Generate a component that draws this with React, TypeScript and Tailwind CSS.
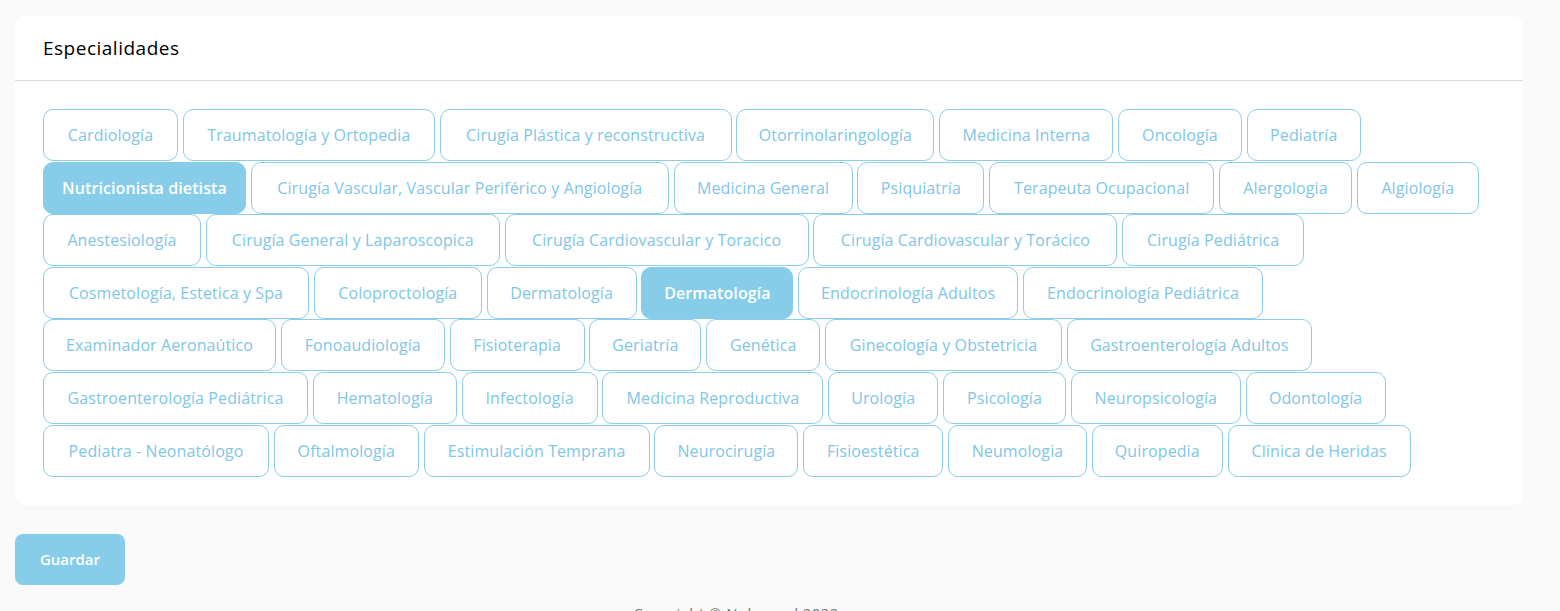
import React from "react";

type Item = { label: string; w: number; active?: boolean };

const items: Item[] = [
  { label: "Cardiología", w: 135 },
  { label: "Traumatología y Ortopedia", w: 252 },
  { label: "Cirugía Plástica y reconstructiva", w: 292 },
  { label: "Otorrinolaringología", w: 198 },
  { label: "Medicina Interna", w: 174 },
  { label: "Oncología", w: 124 },
  { label: "Pediatría", w: 114 },
  { label: "Nutricionista dietista", w: 203, active: true },
  { label: "Cirugía Vascular, Vascular Periférico y Angiología", w: 418 },
  { label: "Medicina General", w: 179 },
  { label: "Psiquiatría", w: 127 },
  { label: "Terapeuta Ocupacional", w: 225 },
  { label: "Alergologia", w: 133 },
  { label: "Algiología", w: 122 },
  { label: "Anestesiología", w: 158 },
  { label: "Cirugía General y Laparoscopica", w: 294 },
  { label: "Cirugía Cardiovascular y Toracico", w: 304 },
  { label: "Cirugía Cardiovascular y Torácico", w: 304 },
  { label: "Cirugía Pediátrica", w: 182 },
  { label: "Cosmetología, Estetica y Spa", w: 266 },
  { label: "Coloproctología", w: 168 },
  { label: "Dermatología", w: 150 },
  { label: "Dermatología", w: 152, active: true },
  { label: "Endocrinología Adultos", w: 220 },
  { label: "Endocrinología Pediátrica", w: 240 },
  { label: "Examinador Aeronaútico", w: 233 },
  { label: "Fonoaudiología", w: 164 },
  { label: "Fisioterapia", w: 135 },
  { label: "Geriatría", w: 112 },
  { label: "Genética", w: 114 },
  { label: "Ginecología y Obstetricia", w: 237 },
  { label: "Gastroenterología Adultos", w: 245 },
  { label: "Gastroenterología Pediátrica", w: 265 },
  { label: "Hematología", w: 144 },
  { label: "Infectología", w: 136 },
  { label: "Medicina Reproductiva", w: 221 },
  { label: "Urología", w: 110 },
  { label: "Psicología", w: 123 },
  { label: "Neuropsicología", w: 170 },
  { label: "Odontología", w: 140 },
  { label: "Pediatra - Neonatólogo", w: 226 },
  { label: "Oftalmología", w: 145 },
  { label: "Estimulación Temprana", w: 226 },
  { label: "Neurocirugía", w: 144 },
  { label: "Fisioestética", w: 140 },
  { label: "Neumologia", w: 139 },
  { label: "Quiropedia", w: 131 },
  { label: "Clínica de Heridas", w: 183 },
];

export default function App() {
  return (
    <div
      className="min-h-[611px] w-full bg-[#fafafa] px-[15px] pt-[16px] overflow-hidden"
      style={{ fontFamily: '"Open Sans", "Noto Sans", sans-serif' }}
    >
      <div className="w-[1508px] rounded-[10px] bg-white">
        <div className="h-[65px] flex items-center px-[28px] border-b border-[#d9dbe6]">
          <h2 className="text-[19px] font-medium text-black tracking-[0.5px]">Especialidades</h2>
        </div>
        <div className="p-[28px]">
          <div className="flex flex-wrap gap-x-[4.8px] gap-y-[0.6px]">
            {items.map((it, i) => (
              <button
                key={i}
                style={{ width: it.w }}
                className={
                  it.active
                    ? "h-[52px] shrink-0 rounded-[10px] border border-[#87cde9] bg-[#87cde9] text-white text-[16px] font-semibold tracking-[0.1px] flex items-center justify-center whitespace-nowrap"
                    : "h-[52px] shrink-0 rounded-[10px] border border-[#8bcdea] bg-white text-[#80c6e7] text-[16px] font-medium tracking-[0.1px] flex items-center justify-center whitespace-nowrap"
                }
              >
                {it.label}
              </button>
            ))}
          </div>
        </div>
      </div>
      <div className="mt-[29px]">
        <button className="w-[110px] h-[51px] rounded-[8px] bg-[#87cde9] text-white text-[15px] font-semibold">
          Guardar
        </button>
      </div>
      <div className="mt-[17px] flex justify-center pr-[88px] text-[15px] tracking-[0.4px] text-[#777777]">
        Copyright © Nubemed 2022
      </div>
    </div>
  );
}
